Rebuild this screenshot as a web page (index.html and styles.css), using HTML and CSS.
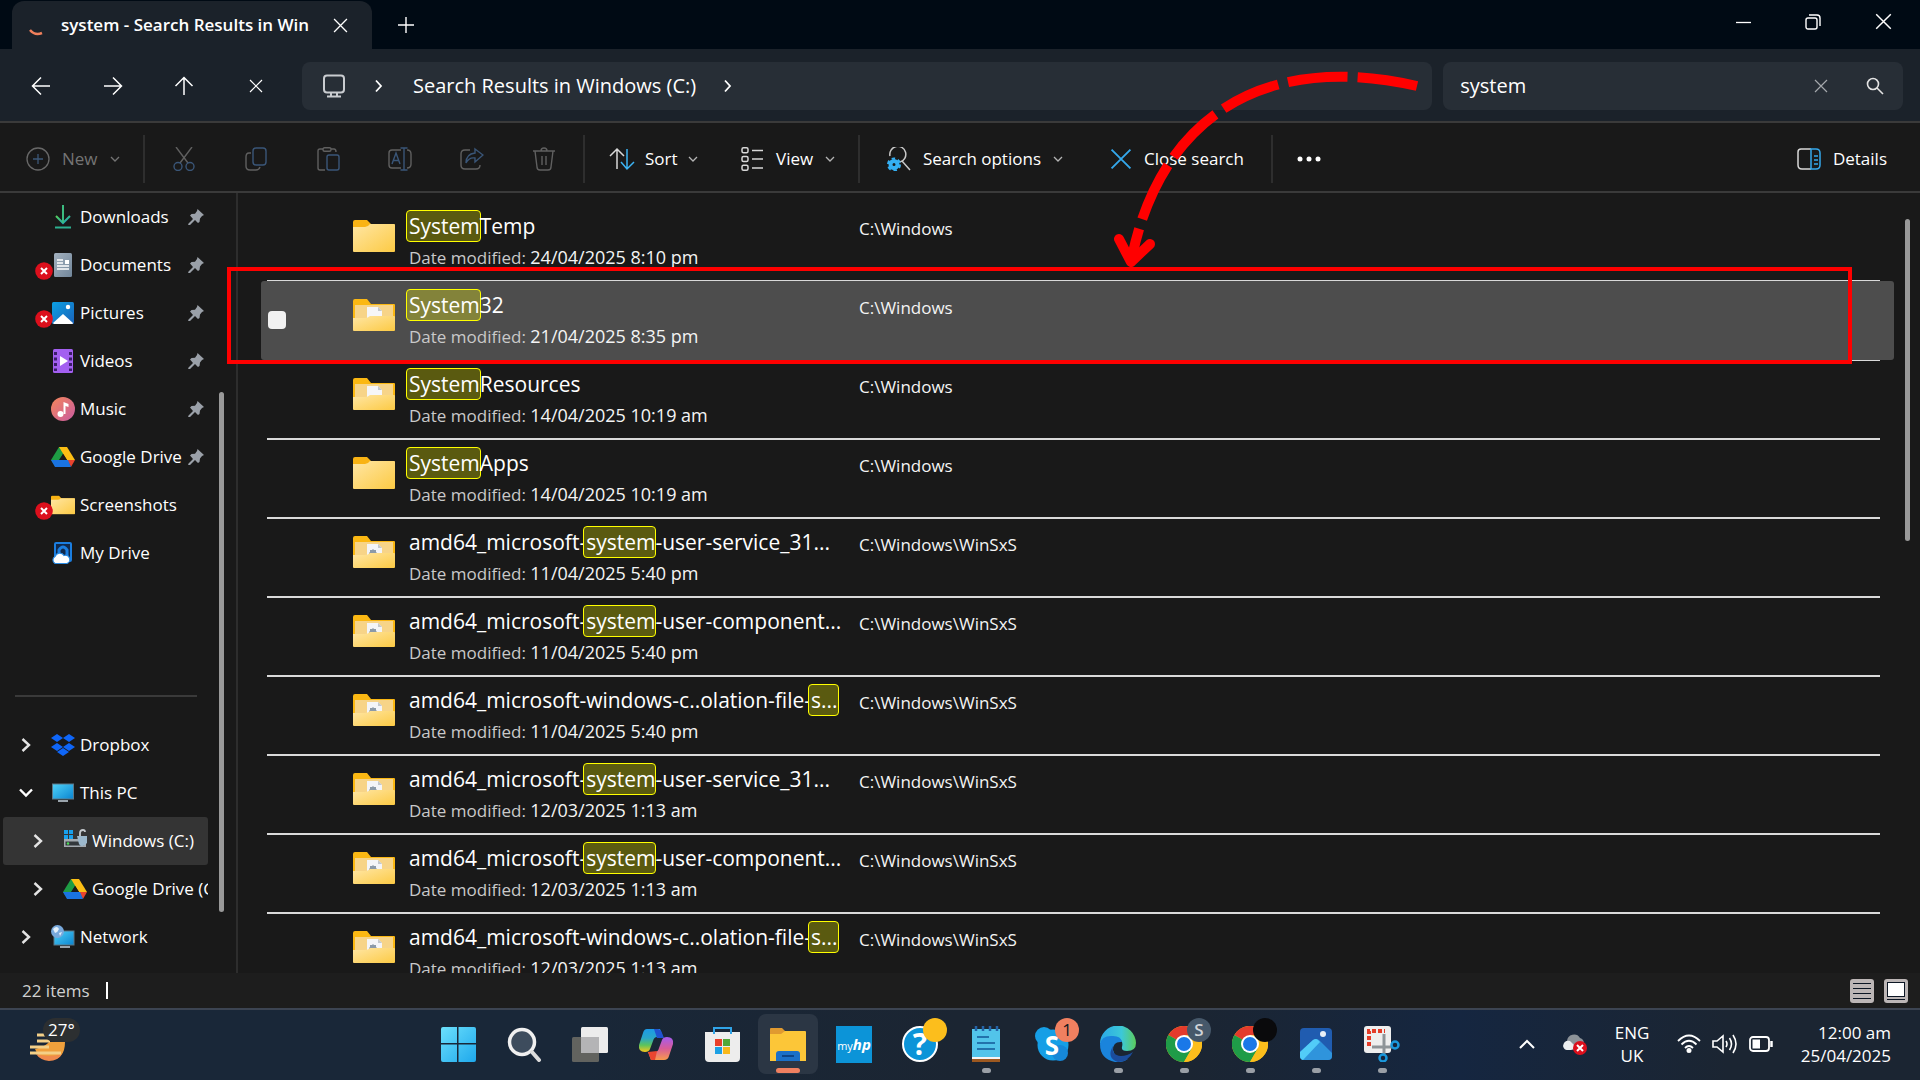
FILE: index.html
```html
<!DOCTYPE html>
<html lang="en-GB">
<head>
<meta charset="utf-8">
<title>system - Search Results in Windows (C:)</title>
<link rel="stylesheet" href="styles.css">
</head>
<body>
<svg class="defs" aria-hidden="true">
  <defs>
    <linearGradient id="gFront" x1="0" y1="0" x2="1" y2="1"><stop offset="0" stop-color="#ffe6a4"/><stop offset="1" stop-color="#fcca44"/></linearGradient>
    <linearGradient id="gSky" x1="0" y1="0" x2="1" y2="1"><stop offset="0" stop-color="#4fd2f8"/><stop offset="1" stop-color="#0a84d0"/></linearGradient>
    <linearGradient id="gPic" x1="0" y1="0" x2="1" y2="1"><stop offset="0" stop-color="#0ba0e4"/><stop offset="1" stop-color="#1a62b8"/></linearGradient>
    <linearGradient id="gMusic" x1="0" y1="0" x2="1" y2="1"><stop offset="0" stop-color="#f5875a"/><stop offset="1" stop-color="#c85aa0"/></linearGradient>
    <linearGradient id="gDown" x1="0" y1="0" x2="1" y2="1"><stop offset="0" stop-color="#55d05a"/><stop offset="1" stop-color="#14a0c8"/></linearGradient>
    <linearGradient id="gDoc" x1="0" y1="0" x2="1" y2="1"><stop offset="0" stop-color="#a4b2c0"/><stop offset="1" stop-color="#71869a"/></linearGradient>
    <linearGradient id="gCopA" x1="0" y1="0" x2="0" y2="1"><stop offset="0" stop-color="#1c9ae8"/><stop offset=".4" stop-color="#2aa6c8"/><stop offset=".7" stop-color="#5cc45c"/><stop offset="1" stop-color="#f8c81c"/></linearGradient>
    <linearGradient id="gCopB" x1="0" y1="0" x2="0" y2="1"><stop offset="0" stop-color="#a45cf0"/><stop offset=".5" stop-color="#d85c98"/><stop offset="1" stop-color="#f89a4c"/></linearGradient>
    <linearGradient id="gEdge" x1="0" y1="0" x2="1" y2="0"><stop offset="0" stop-color="#2aa8e8"/><stop offset=".6" stop-color="#3cc8d8"/><stop offset="1" stop-color="#5ccc5c"/></linearGradient>
    <linearGradient id="gStart" x1="0" y1="0" x2="1" y2="1"><stop offset="0" stop-color="#6ce0fc"/><stop offset="1" stop-color="#1ea8ec"/></linearGradient>
  </defs>
  <symbol id="folder" viewBox="0 0 42 34"><path d="M0 3a2 2 0 0 1 2-2h12l4 4h22a2 2 0 0 1 2 2v10H0z" fill="#f9b314"/><path d="M0 8h12q3 0 5-3h24a1 1 0 0 1 1 1v26a1 1 0 0 1-1 1H1a1 1 0 0 1-1-1z" fill="url(#gFront)"/></symbol>
  <symbol id="folder-doc" viewBox="0 0 42 34"><path d="M0 3a2 2 0 0 1 2-2h12l4 5h23a1 1 0 0 1 1 1v25H0z" fill="#fbb813"/><path d="M2 7h38v16H2z" fill="#f7d488"/><path d="M14 9h11l4 4v12H14z" fill="#f6f6f8"/><path d="M25 9v4h4z" fill="#c4c8cc"/><path d="M0 20h12q3 0 5-2h24a1 1 0 0 1 1 1v13a1 1 0 0 1-1 1H1a1 1 0 0 1-1-1z" fill="url(#gFront)"/></symbol>
  <symbol id="folder-gear" viewBox="0 0 42 34"><path d="M0 3a2 2 0 0 1 2-2h12l4 5h23a1 1 0 0 1 1 1v25H0z" fill="#fbb813"/><path d="M2 7h38v16H2z" fill="#f7d488"/><path d="M14 9h11l4 4v12H14z" fill="#f4f5f8"/><path d="M25 9v4h4z" fill="#c4c8cc"/><path d="M16 20v-2l1-1v-2h2l1-1 1 1h2v2l1 1v2h-2.500a1.500 1.500 0 0 0-3 0z" fill="#8c9aa8"/><path d="M0 20h12q3 0 5-2h24a1 1 0 0 1 1 1v13a1 1 0 0 1-1 1H1a1 1 0 0 1-1-1z" fill="url(#gFront)"/></symbol>
  <symbol id="pin" viewBox="0 0 16 16"><path d="M9.500 0 16 6l-2 1-2 2.500-.5 3.500-1.500 1-3-3-5 5-2 .5.500-2 4.500-4.500L2 6.500 3.500 5l3.500-.3L9 2z" fill="#9aa0a8"/></symbol>
  <symbol id="chev-right" viewBox="0 0 10 16"><path d="m1.500 2 6.500 6-6.500 6" fill="none" stroke="#e4e4e4" stroke-width="2.400"/></symbol>
  <symbol id="chev-crumb" viewBox="0 0 10 16"><path d="m2 2.500 5 5.500-5 5.500" fill="none" stroke="#fff" stroke-width="1.800"/></symbol>
  <symbol id="chev-down" viewBox="0 0 16 10"><path d="m2 1.500 6 6 6-6" fill="none" stroke="#fff" stroke-width="2.400"/></symbol>
  <symbol id="chev-small" viewBox="0 0 10 10"><path d="m1 3 4 4 4-4" fill="none" stroke="currentColor" stroke-width="1.300"/></symbol>
  <symbol id="cross" viewBox="0 0 14 14"><path d="M1 1l12 12M13 1 1 13" fill="none" stroke="currentColor" stroke-width="1.200"/></symbol>
  <symbol id="error" viewBox="0 0 18 18"><circle cx="9" cy="9" r="8.800" fill="#dc0f1c"/><path d="m6 6 6 6m0-6-6 6" stroke="#fff" stroke-width="2"/></symbol>
  <symbol id="gdrive" viewBox="0 0 24 22"><path d="M8 1h8l-8 14-4 5-4-6z" fill="#1e9c44"/><path d="M8 1h8l8 13h-8z" fill="#fcbe14"/><path d="M16 14h8l-4 7z" fill="#e8432e"/><path d="M0 14h17l3 7H4z" fill="#1a73e0"/><path d="M12 8l4 6H8z" fill="#191919"/></symbol>
  <symbol id="chrome" viewBox="0 0 36 36"><circle cx="18" cy="18" r="18" fill="#fcbe1c"/><path d="M18 18 2.400 9A18 18 0 0 1 33.600 9z" fill="#e43b2c"/><path d="M18 18 2.400 9A18 18 0 0 0 18 36l7.500-13z" fill="#1f9c48"/><path d="M18 9h15.600A18 18 0 0 1 18 36l7.800-13.500z" fill="#fcbe1c"/><circle cx="18" cy="18" r="9" fill="#fff"/><circle cx="18" cy="18" r="7" fill="#1a78e8"/></symbol>
</svg>

<div class="window">
  <header class="titlebar">
    <div class="tab">
      <svg class="spinner" width="14" height="8" viewBox="0 0 14 8"><path d="M1 1q5 6 12 3" fill="none" stroke="#f0805c" stroke-width="2.500"/></svg>
      <span class="tab-title">system - Search Results in Win</span>
      <button class="plain" aria-label="Close tab"><svg width="15" height="15"><use href="#cross"/></svg></button>
    </div>
    <button class="plain add-tab" aria-label="New tab"><svg width="16" height="16" viewBox="0 0 16 16"><path d="M8 0v16M0 8h16" stroke="#fff" stroke-width="1.400"/></svg></button>
    <div class="caption">
      <button class="plain" aria-label="Minimise"><svg width="16" height="16" viewBox="0 0 16 16"><path d="M1 8.500h15" stroke="#fff" stroke-width="1.300"/></svg></button>
      <button class="plain" aria-label="Restore"><svg width="16" height="16" viewBox="0 0 16 16" fill="none" stroke="#fff" stroke-width="1.400"><rect x="1" y="4" width="11" height="11" rx="2"/><path d="M4 1h8q3 0 3 3v8"/></svg></button>
      <button class="plain" aria-label="Close"><svg width="17" height="17"><use href="#cross"/></svg></button>
    </div>
  </header>

  <nav class="navbar">
    <div class="nav-buttons">
      <button class="plain" aria-label="Back"><svg width="20" height="20" viewBox="0 0 20 20" fill="none" stroke="#fff" stroke-width="1.500"><path d="M19 10H1.500M10 1.500 1.500 10l8.500 8.500"/></svg></button>
      <button class="plain" aria-label="Forward"><svg width="20" height="20" viewBox="0 0 20 20" fill="none" stroke="#fff" stroke-width="1.500"><path d="M1 10h17.500M10 1.500l8.500 8.500-8.500 8.500"/></svg></button>
      <button class="plain" aria-label="Up"><svg width="20" height="20" viewBox="0 0 20 20" fill="none" stroke="#fff" stroke-width="1.500"><path d="M10 19V1.500M1.500 10 10 1.500l8.500 8.500"/></svg></button>
      <button class="plain" aria-label="Stop"><svg width="14" height="14"><use href="#cross"/></svg></button>
    </div>
    <div class="address">
      <svg width="24" height="24" viewBox="0 0 24 24" fill="none" stroke="#c9ccd0" stroke-width="2"><rect x="2" y="1.500" width="20" height="17" rx="3"/><path d="M9 19v3M15 19v3M5 22.500h14"/></svg>
      <svg class="crumb-chev" width="10" height="16"><use href="#chev-crumb"/></svg>
      <a class="crumb" href="#">Search Results in Windows (C:)</a>
      <svg width="10" height="16"><use href="#chev-crumb"/></svg>
    </div>
    <div class="search">
      <input type="text" value="system" aria-label="Search">
      <button class="plain dim" aria-label="Clear"><svg width="14" height="14"><use href="#cross"/></svg></button>
      <button class="plain" aria-label="Search"><svg width="18" height="18" viewBox="0 0 18 18" fill="none" stroke="#e4e4e4" stroke-width="1.600"><circle cx="7" cy="7" r="5.500"/><path d="m11 11 6 6"/></svg></button>
    </div>
  </nav>

  <div class="commands">
    <button class="cmd new off"><svg width="24" height="24" viewBox="0 0 24 24" fill="none" stroke="#686868" stroke-width="1.300"><circle cx="12" cy="12" r="11"/><path d="M12 7v10M7 12h10" stroke="#3d5878"/></svg><span>New</span><svg width="10" height="10"><use href="#chev-small"/></svg></button>
    <i class="rule"></i>
    <div class="tools">
      <button class="plain" aria-label="Cut"><svg width="24" height="24" viewBox="0 0 24 24" fill="none" stroke="#606060" stroke-width="1.400"><path d="m4 0 12 16M20 0 8 16"/><g stroke="#3a5678"><circle cx="6" cy="19.500" r="4"/><circle cx="18" cy="19.500" r="4"/></g></svg></button>
      <button class="plain" aria-label="Copy"><svg width="24" height="24" viewBox="0 0 24 24" fill="none" stroke="#606060" stroke-width="1.400"><path d="M7 6H5Q2 6 2 10v9q0 4 4 4h6q3 0 4-3"/><rect x="9" y="1" width="13" height="17" rx="3" stroke="#3a5678"/></svg></button>
      <button class="plain" aria-label="Paste"><svg width="24" height="24" viewBox="0 0 24 24" fill="none" stroke="#606060" stroke-width="1.400"><path d="M7 2H4Q2 2 2 4v17q0 2 2 2h5M15 2h3q2 0 2 3"/><rect x="7" y="0.700" width="8" height="3.500" rx="1.500"/><rect x="11" y="8" width="12" height="15" rx="2" stroke="#3a5678"/></svg></button>
      <button class="plain" aria-label="Rename"><svg width="24" height="24" viewBox="0 0 24 24" fill="none" stroke="#606060" stroke-width="1.400"><path d="M13 3H4Q1 3 1 6v12q0 3 3 3h9M19 3q4 0 4 4v10q0 4-4 4"/><path d="m4 17 4-11 4 11M5.500 13.500h5M16 1v22M12.500 1h7M12.500 23h7" stroke="#3a5678"/></svg></button>
      <button class="plain" aria-label="Share"><svg width="24" height="24" viewBox="0 0 24 24" fill="none" stroke="#606060" stroke-width="1.400"><path d="M10 3H5Q1 3 1 7v11q0 4 4 4h11q4 0 4-4"/><path d="m15 2 8 6-8 7v-4Q9 10 6 16 6 7 15 6z" stroke="#3a5678"/></svg></button>
      <button class="plain" aria-label="Delete"><svg width="24" height="24" viewBox="0 0 24 24" fill="none" stroke="#606060" stroke-width="1.400"><path d="M1 4h22M9 4q0-3 3-3t3 3M3 4l2 16q0 3 3 3h8q3 0 3-3l2-16M10 9v9M14 9v9"/></svg></button>
    </div>
    <i class="rule"></i>
    <button class="cmd sort"><svg width="26" height="24" viewBox="0 0 26 24" fill="none" stroke="#d8d8d8" stroke-width="1.500"><path d="M8 22V2M1 9l7-7 7 7"/><path d="M18 2v20M12 15l6 7 7-7" stroke="#3cb4f4"/></svg><span>Sort</span><svg width="10" height="10"><use href="#chev-small"/></svg></button>
    <button class="cmd view"><svg width="24" height="24" viewBox="0 0 24 24" fill="none" stroke="#d8d8d8" stroke-width="1.500"><rect x="2" y="0.800" width="6" height="5" rx="1.500"/><rect x="2" y="9.500" width="6" height="5" rx="1.500"/><rect x="2" y="18.200" width="6" height="5" rx="1.500"/><path d="M12 3.500h11M12 12h11M12 21h11"/></svg><span>View</span><svg width="10" height="10"><use href="#chev-small"/></svg></button>
    <i class="rule"></i>
    <button class="cmd options"><svg width="24" height="24" viewBox="0 0 24 24" fill="none" stroke="#c8c8c8" stroke-width="1.500"><path d="M3 9A8 8 0 1 1 13 15M15 14l8 9"/><circle cx="7" cy="17.500" r="3.500" stroke="#34b0f4" stroke-width="4"/><circle cx="7" cy="17.500" r="6" stroke="#34b0f4" stroke-width="2" stroke-dasharray="3.500 2.800"/></svg><span>Search options</span><svg width="10" height="10"><use href="#chev-small"/></svg></button>
    <button class="cmd close-search"><svg class="blue" width="22" height="22"><use href="#cross"/></svg><span>Close search</span></button>
    <i class="rule"></i>
    <button class="plain more" aria-label="More"><svg width="24" height="6" viewBox="0 0 24 6" fill="#fff"><circle cx="3" cy="3" r="2.500"/><circle cx="12" cy="3" r="2.500"/><circle cx="21" cy="3" r="2.500"/></svg></button>
    <button class="cmd details"><svg width="24" height="24" viewBox="0 0 24 24" fill="none" stroke="#d8d8d8" stroke-width="1.500"><path d="M14 2H4Q1 2 1 5v13q0 4 4 4h9"/><path d="M14 2h5q4 0 4 4v12q0 4-4 4h-5zM17 9h4M17 13h4M17 17h4" stroke="#34a8ec"/></svg><span>Details</span></button>
  </div>

  <div class="body">
    <aside class="sidebar">
      <ul class="tree">
        <li><a href="#"><svg class="ico" viewBox="0 0 24 24"><path d="M5 11l7 7 7-7" fill="none" stroke="url(#gDown)" stroke-width="2"/><path d="M12 0v18" stroke="#3cbc80" stroke-width="2"/><path d="M4 22.500h16" stroke="#2cb090" stroke-width="2"/></svg><span>Downloads</span><svg class="pin"><use href="#pin"/></svg></a></li>
        <li><a href="#"><svg class="err"><use href="#error"/></svg><svg class="ico" viewBox="0 0 24 24"><rect x="3" y="0" width="18" height="24" rx="1.500" fill="url(#gDoc)"/><path d="M6 7h6M6 10h6M6 13h12M6 16h12" stroke="#fff" stroke-width="1.500"/><path d="M14 7h4v4h-4z" fill="#fff"/></svg><span>Documents</span><svg class="pin"><use href="#pin"/></svg></a></li>
        <li><a href="#"><svg class="err"><use href="#error"/></svg><svg class="ico" viewBox="0 0 24 24"><rect x="1" y="1" width="22" height="22" rx="1.500" fill="url(#gPic)"/><path d="m2 22 10-9 10 9q0 1-1 1H3z" fill="#fff"/><circle cx="17" cy="6" r="2.200" fill="#fff"/></svg><span>Pictures</span><svg class="pin"><use href="#pin"/></svg></a></li>
        <li><a href="#"><svg class="ico" viewBox="0 0 24 24"><rect x="2" y="0" width="20" height="24" rx="1.500" fill="#a35ff0"/><path d="M4.500 3v19M19.500 3v19" stroke="#3c1d6c" stroke-width="3" stroke-dasharray="3 2.500"/><path d="m9 7 8 5-8 5z" fill="#fff"/></svg><span>Videos</span><svg class="pin"><use href="#pin"/></svg></a></li>
        <li><a href="#"><svg class="ico" viewBox="0 0 24 24"><circle cx="12" cy="12" r="12" fill="url(#gMusic)"/><circle cx="9.500" cy="17" r="3" fill="#fff"/><path d="M12.500 17V5l5 2v3l-3-1v8z" fill="#fff"/></svg><span>Music</span><svg class="pin"><use href="#pin"/></svg></a></li>
        <li><a href="#"><svg class="ico" viewBox="0 0 24 22"><use href="#gdrive"/></svg><span>Google Drive</span><svg class="pin"><use href="#pin"/></svg></a></li>
        <li><a href="#"><svg class="err"><use href="#error"/></svg><svg class="ico" viewBox="0 0 42 34"><use href="#folder"/></svg><span>Screenshots</span></a></li>
        <li><a href="#"><svg class="ico" viewBox="0 0 24 24"><rect x="4" y="2" width="16" height="18" rx="1" fill="#10294c" stroke="#1b7ee0" stroke-width="2"/><path d="M8 14V9q4-6 8 0v6" fill="none" stroke="#1b7ee0" stroke-width="3"/><path d="M4 22.500a4 4 0 0 1 0-7 5 5 0 0 1 9-1 4 4 0 0 1 3 8z" fill="#fff" stroke="#2b8ce4" stroke-width="1.200"/></svg><span>My Drive</span></a></li>
      </ul>
      <ul class="tree places">
        <li><a href="#"><svg class="chev"><use href="#chev-right"/></svg><svg class="ico" viewBox="0 0 24 24" fill="#0f66f8"><path d="m6 1 6 4-6 4-6-4zM18 1l6 4-6 4-6-4zM6 10l6 4-6 4-6-4zM18 10l6 4-6 4-6-4zM12 15l6 4-6 4-6-4z"/></svg><span>Dropbox</span></a></li>
        <li><a href="#"><svg class="chev wide"><use href="#chev-down"/></svg><svg class="ico" viewBox="0 0 24 24"><path d="M7 19h10v2H7z" fill="#9aa4ac"/><rect x="1.500" y="3" width="21" height="15" fill="url(#gSky)" stroke="#5c7888"/></svg><span>This PC</span></a></li>
        <li class="deep current"><a href="#"><svg class="chev"><use href="#chev-right"/></svg><svg class="ico" viewBox="0 0 24 24"><path d="M1 1h4v4H1zM6 1h4v4H6zM1 6h4v4H1zM6 6h4v4H6z" fill="#18a0ec"/><path d="M1 10h22v8H1z" fill="#a4aab0"/><path d="M2.500 12.500h18v4h-18z" fill="#33383c"/><circle cx="5" cy="14.500" r="1.200" fill="#4cdc58"/><path d="M17 8V4q0-3 3-3 2 0 2 2" fill="none" stroke="#c4c8cc" stroke-width="1.800"/><path d="M14 7h10v7q-5 6-8 1z" fill="#9cb8cc"/></svg><span>Windows (C:)</span></a></li>
        <li class="deep"><a href="#"><svg class="chev"><use href="#chev-right"/></svg><svg class="ico" viewBox="0 0 24 22"><use href="#gdrive"/></svg><span>Google Drive (G:)</span></a></li>
        <li><a href="#"><svg class="chev"><use href="#chev-right"/></svg><svg class="ico" viewBox="0 0 24 24"><path d="M9 21h10v2H9z" fill="#9aa4ac"/><rect x="3" y="6" width="20" height="14" fill="url(#gSky)" stroke="#5c7888"/><circle cx="6.500" cy="6.500" r="6.500" fill="#79a9dc"/><path d="M2 4q4-4 6 0-1 3-4 4zM8 8l3-1-2 4z" fill="#e4f0fa"/></svg><span>Network</span></a></li>
      </ul>
      <i class="thumb side-thumb"></i>
    </aside>

    <main class="results">
      <ul class="rows">
        <li><svg class="fold"><use href="#folder"/></svg><div class="item"><a class="name" href="#"><mark>System</mark>Temp</a><p>Date modified: <b>24/04/2025 8:10 pm</b></p></div><span class="path">C:\Windows</span></li>
        <li class="selected"><input type="checkbox" aria-label="Select System32"><svg class="fold"><use href="#folder-doc"/></svg><div class="item"><a class="name" href="#"><mark>System</mark>32</a><p>Date modified: <b>21/04/2025 8:35 pm</b></p></div><span class="path">C:\Windows</span></li>
        <li><svg class="fold"><use href="#folder-doc"/></svg><div class="item"><a class="name" href="#"><mark>System</mark>Resources</a><p>Date modified: <b>14/04/2025 10:19 am</b></p></div><span class="path">C:\Windows</span></li>
        <li><svg class="fold"><use href="#folder"/></svg><div class="item"><a class="name" href="#"><mark>System</mark>Apps</a><p>Date modified: <b>14/04/2025 10:19 am</b></p></div><span class="path">C:\Windows</span></li>
        <li><svg class="fold"><use href="#folder-gear"/></svg><div class="item"><a class="name" href="#">amd64_microsoft-<mark>system</mark>-user-service_31...</a><p>Date modified: <b>11/04/2025 5:40 pm</b></p></div><span class="path">C:\Windows\WinSxS</span></li>
        <li><svg class="fold"><use href="#folder-gear"/></svg><div class="item"><a class="name" href="#">amd64_microsoft-<mark>system</mark>-user-component...</a><p>Date modified: <b>11/04/2025 5:40 pm</b></p></div><span class="path">C:\Windows\WinSxS</span></li>
        <li><svg class="fold"><use href="#folder-gear"/></svg><div class="item"><a class="name" href="#">amd64_microsoft-windows-c..olation-file-<mark>s...</mark></a><p>Date modified: <b>11/04/2025 5:40 pm</b></p></div><span class="path">C:\Windows\WinSxS</span></li>
        <li><svg class="fold"><use href="#folder-gear"/></svg><div class="item"><a class="name" href="#">amd64_microsoft-<mark>system</mark>-user-service_31...</a><p>Date modified: <b>12/03/2025 1:13 am</b></p></div><span class="path">C:\Windows\WinSxS</span></li>
        <li><svg class="fold"><use href="#folder-gear"/></svg><div class="item"><a class="name" href="#">amd64_microsoft-<mark>system</mark>-user-component...</a><p>Date modified: <b>12/03/2025 1:13 am</b></p></div><span class="path">C:\Windows\WinSxS</span></li>
        <li><svg class="fold"><use href="#folder-gear"/></svg><div class="item"><a class="name" href="#">amd64_microsoft-windows-c..olation-file-<mark>s...</mark></a><p>Date modified: <b>12/03/2025 1:13 am</b></p></div><span class="path">C:\Windows\WinSxS</span></li>
      </ul>
      <i class="thumb list-thumb"></i>
    </main>
  </div>

  <footer class="status">
    <span>22 items</span><i class="caret"></i>
    <div class="modes">
      <button class="plain" aria-label="Details view"><svg width="24" height="24" viewBox="0 0 24 24"><rect width="24" height="24" rx="3" fill="#bcb6b6"/><path d="M3 4.500h18M3 9.500h18M3 14.500h18M3 19.500h18" stroke="#0c1624" stroke-width="1.200"/></svg></button>
      <button class="plain" aria-label="Large icons view"><svg width="24" height="24" viewBox="0 0 24 24"><rect width="24" height="24" rx="3" fill="#bcb6b6"/><rect x="3.500" y="3.500" width="17" height="14" fill="#fff" stroke="#0c1624"/><path d="M3 20.500h18" stroke="#0c1624"/></svg></button>
    </div>
  </footer>
</div>

<div class="taskbar">
  <button class="weather" aria-label="Weather"><svg width="36" height="30" viewBox="0 0 36 30"><path d="M5 17q10-2 14-7h16q0 18-16 18-10 0-14-11z" fill="#f0a03c"/><path d="M6 22q13 4 26 0-4 7-13 7-9-1-13-7z" fill="#f08a4c"/><path d="M7 3h9M7 9h13M0 15h19M0 21h31" stroke="#f4d088" stroke-width="3"/></svg><span>27°</span></button>
  <div class="apps">
    <button aria-label="Start"><svg viewBox="0 0 36 36" fill="url(#gStart)"><path d="M1 3q0-2 2-2h14v16H1zM18.500 1H34q2 0 2 2v14H18.500zM1 18.500h16V36H3q-2 0-2-2zM18.500 18.500H36V34q0 2-2 2H18.500z"/></svg></button>
    <button aria-label="Search"><svg viewBox="0 0 36 36"><circle cx="16" cy="16" r="12.500" fill="#3d4c5d" stroke="#f0f0f0" stroke-width="3.500"/><path d="m26 26 7 8" stroke="#dcdcdc" stroke-width="4" stroke-linecap="round"/></svg></button>
    <button aria-label="Task view"><svg viewBox="0 0 36 36"><rect x="0" y="11" width="27" height="25" rx="1.500" fill="#62635f"/><rect x="9" y="1" width="27" height="26" rx="1.500" fill="#ececec"/><path d="M9 11h18v16H9z" fill="#b4b4b6"/></svg></button>
    <button aria-label="Copilot"><svg viewBox="0 0 36 36"><path d="M9 3h13l3 8h-6q-3 0-4 4l-3 8q-1 3-5 3-7 0-6-7L5 7q1-4 4-4z" fill="url(#gCopA)"/><path d="M19 3q4 0 5 4l2 5h-7l-3-9z" fill="#2052d0"/><path d="M26 34H13l-3-8h7q3 0 4-4l3-8q1-3 5-3 7 0 6 7l-4 12q-1 4-5 4z" fill="url(#gCopB)"/><path d="m10 26 3 8h4l2-9z" fill="#ea4530"/></svg></button>
    <button aria-label="Store"><svg viewBox="0 0 36 36"><path d="M1 6h35v26q0 4-4 4H5q-4 0-4-4z" fill="#ededed"/><path d="M10 8V2h17v6" fill="none" stroke="#30a4e8" stroke-width="2"/><path d="M11 13h7v7h-7z" fill="#e8402a"/><path d="M19 13h7v7h-7z" fill="#52a838"/><path d="M11 21h7v7h-7z" fill="#1ca0e4"/><path d="M19 21h7v7h-7z" fill="#f8b81c"/></svg></button>
    <button class="active" aria-label="File Explorer"><svg viewBox="0 0 36 36"><path d="M0 3q0-1 1-1h11l3 3v5H0z" fill="#e09a30"/><path d="M0 8h11l4-3h20q1 0 1 1v29H0z" fill="#fcc638"/><path d="M6 35v-7q0-3 3-3h18q3 0 3 3v7z" fill="#1b70c8"/><path d="M12 30h12" stroke="#0d4588" stroke-width="2"/></svg><i class="run"></i></button>
    <button aria-label="myHP"><span class="myhp">my<em>hp</em></span></button>
    <button aria-label="Help"><span class="help">?</span><i class="badge amber"></i></button>
    <button aria-label="Notepad"><svg viewBox="0 0 36 36"><path d="M4 3h28v29H4z" fill="#52c4ea"/><path d="M4 31h28v2H4z" fill="#f4f4f4"/><path d="M4 33h28v3H4z" fill="#9c5820"/><path d="M9 11h12M9 17h18M9 23h18" stroke="#2272ac" stroke-width="2"/><path d="M8 0v5M15 0v5M22 0v5M29 0v5" stroke="#2464a8" stroke-width="2.500"/></svg><i class="run"></i></button>
    <button aria-label="Skype"><svg viewBox="0 0 36 36"><circle cx="19" cy="19" r="15.500" fill="#169fe6"/><circle cx="10" cy="10" r="9" fill="#169fe6"/><circle cx="26" cy="27" r="8" fill="#1688d8"/></svg><span class="skype">S</span><i class="badge coral">1</i></button>
    <button aria-label="Edge"><svg viewBox="0 0 36 36"><path d="M0 18A18 18 0 0 1 36 17q0 8-9 8-6 0-5-4 2-8-6-9-10-1-16 6z" fill="url(#gEdge)"/><path d="M0 18q2-9 13-8 8 0 9 6-9-1-9 8 3 12 15 9-6 4-13 3Q0 33 0 18z" fill="#1a84dc"/><path d="M13 20q-2 9 8 10 6 0 12-4-5 10-15 10-12-4-5-16z" fill="#1b4c9c"/></svg><i class="run"></i></button>
    <button aria-label="Chrome, profile S"><svg viewBox="0 0 36 36"><use href="#chrome"/></svg><i class="badge slate">S</i><i class="run"></i></button>
    <button aria-label="Chrome"><svg viewBox="0 0 36 36"><use href="#chrome"/></svg><i class="badge black"></i><i class="run"></i></button>
    <button aria-label="Photos"><svg viewBox="0 0 36 36"><rect x="2" y="2" width="32" height="32" rx="4" fill="#205cb0"/><path d="M2 26 15 14q3-2 6 0l13 13v3q0 4-4 4H6q-4 0-4-4z" fill="#2f94dc"/><path d="m2 26 13-12q3-2 5 0l2 2L5 34q-3-1-3-4z" fill="#52ccf8"/><circle cx="25" cy="8" r="3" fill="#e8f0f8"/></svg><i class="run"></i></button>
    <button aria-label="Snipping Tool"><svg viewBox="0 0 36 36"><rect x="0" y="0" width="27" height="27" rx="3" fill="#eeeeee"/><path d="M5 20V5h16" fill="none" stroke="#e43c28" stroke-width="4" stroke-dasharray="4 2"/><path d="M20 8v20M8 21h20" stroke="#8e9498" stroke-width="3"/><circle cx="31" cy="19" r="3.500" fill="none" stroke="#1a98dc" stroke-width="2.500"/><circle cx="19" cy="32" r="3.500" fill="none" stroke="#1a98dc" stroke-width="2.500"/></svg><i class="run"></i></button>
  </div>
  <div class="tray">
    <button class="plain" aria-label="Show hidden icons"><svg width="16" height="10" viewBox="0 0 16 10"><path d="m1 9 7-7 7 7" fill="none" stroke="#fff" stroke-width="2"/></svg></button>
    <button class="plain cloud" aria-label="OneDrive"><svg width="26" height="22" viewBox="0 0 26 22"><path d="M5 17a5 5 0 0 1 0-9 7 7 0 0 1 13-3q4 1 4 6t-4 6z" fill="#8c9298"/><path d="M1 13q1-6 7-5l6 6-5 3H5q-3 0-4-4z" fill="#eceef0"/><circle cx="18" cy="15" r="7" fill="#dc0f1c"/><path d="m15 12 6 6m0-6-6 6" stroke="#fff" stroke-width="2"/></svg></button>
    <button class="plain lang">ENG<br>UK</button>
    <button class="plain net" aria-label="Network, volume, battery">
      <svg width="24" height="20" viewBox="0 0 24 20" fill="none" stroke="#fff" stroke-width="1.800"><path d="M1 7q11-11 22 0M4.500 10.500q7.500-7.500 15 0M8 14q4-4 8 0"/><circle cx="12" cy="16.500" r="1.600" fill="#fff"/></svg>
      <svg width="26" height="20" viewBox="0 0 26 20" fill="none" stroke="#fff" stroke-width="1.600"><path d="M1 7h4l6-5v16l-6-5H1zM14 7q2 3 0 6M17.500 4q4 6 0 12M21 1q6 9 0 18"/></svg>
      <svg width="24" height="16" viewBox="0 0 24 16"><rect x="1" y="1" width="19" height="14" rx="3" fill="none" stroke="#fff" stroke-width="1.800"/><path d="M3.500 3.500H11v9H3.500z" fill="#fff"/><path d="M22.500 5v6" stroke="#fff" stroke-width="2.500"/></svg>
    </button>
    <button class="plain clock">12:00 am<br>25/04/2025</button>
  </div>
</div>

<div class="callout-box"></div>
<svg class="callout-arrow" width="320" height="210" viewBox="1110 60 320 210" fill="none" stroke="#f00" stroke-width="10"><path d="M1417 86C1260 50 1158 121 1131 262" stroke-dasharray="60 10"/><path d="m1119 239 12 23 19-18" stroke-linecap="round" stroke-linejoin="round"/></svg>
</body>
</html>
```
FILE: styles.css
```css
* { box-sizing: border-box; }

body {
  margin: 0;
  height: 100vh;
  display: flex;
  flex-direction: column;
  position: relative;
  overflow: hidden;
  background: #191919;
  color: #fff;
  font: 17px/24px "Open Sans", "Noto Sans", sans-serif;
}

svg { display: block; flex: none; }
ul, p { margin: 0; padding: 0; list-style: none; }
a { color: inherit; text-decoration: none; }
i, em { font-style: normal; }
button { font: inherit; color: inherit; background: none; border: 0; padding: 0; }
.defs { position: absolute; width: 0; height: 0; }
.plain { display: flex; align-items: center; justify-content: center; }
.dim { color: #a4a8ac; }
.blue { color: #34a8ec; }

.window { flex: 1; min-height: 0; display: flex; flex-direction: column; }

/* Title bar */
.titlebar { height: 49px; flex: none; display: flex; padding-right: 2px; background: #000a14; }
.tab {
  width: 360px;
  margin: 1px 0 0 12px;
  padding: 0 24px 0 17px;
  display: flex;
  align-items: center;
  gap: 18px;
  background: #1b222a;
  border-radius: 12px 12px 0 0;
}
.spinner { margin-top: 16px; }
.tab-title { flex: 1; white-space: nowrap; font-weight: 600; }
.add-tab { width: 68px; }
.caption { margin-left: auto; display: flex; }
.caption .plain { width: 70px; height: 43px; }

/* Navigation bar */
.navbar { height: 72px; flex: none; display: flex; align-items: center; padding: 2px 17px 0 0; background: #1b222a; }
.nav-buttons { display: flex; width: 302px; padding: 0 10px 0 5px; }
.nav-buttons .plain { width: 72px; height: 48px; }
.address, .search { height: 48px; display: flex; align-items: center; border-radius: 8px; background: #272e36; }
.address { flex: 1; padding-left: 20px; font-size: 20px; }
.crumb-chev { margin: 0 29px 0 28px; }
.crumb { margin-right: 27px; }
.search { width: calc(24% + 3px); margin-left: 11px; padding: 0 19px 0 17px; gap: 38px; }
.search input { flex: 1; min-width: 0; padding: 0; border: 0; outline: 0; background: none; color: #fff; font: inherit; font-size: 20px; }

/* Command bar */
.commands {
  height: 72px;
  flex: none;
  display: flex;
  align-items: center;
  padding: 4px 33px 0 26px;
  border-top: 2px solid #3a3a3a;
  border-bottom: 2px solid #3a3a3a;
  white-space: nowrap;
}
.cmd { display: flex; align-items: center; gap: 10px; }
.cmd svg:last-child { color: #b4b4b4; }
.off, .off svg:last-child { color: #747474; }
.new { width: 117px; gap: 12px; }
.rule { width: 2px; height: 48px; background: #2e2e2e; }
.tools { display: flex; width: 438px; padding-left: 3px; }
.tools .plain { width: 72px; height: 48px; }
.sort { width: 155px; padding-left: 24px; }
.view { width: 118px; gap: 12px; }
.options { width: 250px; padding-left: 27px; gap: 12px; }
.close-search { width: 161px; gap: 12px; }
.more { width: 72px; }
.details { margin-left: auto; gap: 12px; }

/* Sidebar */
.body { flex: 1; min-height: 0; display: flex; }
.sidebar { width: 238px; flex: none; position: relative; overflow: hidden; border-right: 2px solid #2d2d2d; }
.tree { width: 208px; padding: 0 0 0 3px; }
.tree a { position: relative; height: 48px; display: flex; align-items: center; padding-left: 48px; gap: 5px; white-space: nowrap; overflow: hidden; }
.tree .deep a { padding-left: 60px; }
.tree .current { background: #343434; border-radius: 3px; }
.ico { width: 24px; height: 24px; }
.pin { position: absolute; right: 4px; top: 16px; width: 16px; height: 16px; }
.err { position: absolute; left: 32px; top: 21px; width: 18px; height: 18px; }
.chev { position: absolute; left: 18px; top: 16px; width: 10px; height: 16px; }
.deep .chev { left: 30px; }
.chev.wide { left: 15px; top: 19px; width: 16px; height: 10px; }
.places { margin-top: 118px; }
.places::before { content: ""; display: block; width: 182px; height: 2px; margin: 0 0 24px 12px; background: #3a3a3a; }
.thumb { position: absolute; width: 5px; border-radius: 3px; background: #999; }
.side-thumb { right: 12px; top: 199px; height: 520px; }
.list-thumb { right: 10px; top: 26px; height: 322px; }

/* Results */
.results { flex: 1; min-width: 0; position: relative; overflow: hidden; padding: 9px 26px 0 23px; }
.rows li {
  position: relative;
  height: 79px;
  display: flex;
  padding: 5px 0 0 92px;
}
.rows li::before {
  content: "";
  position: absolute;
  inset: -1px 14px auto 6px;
  height: 2px;
  background: #d9d9d9;
}
.rows li:first-child::before { display: none; }
.rows .selected { background: #4d4d4d; z-index: 1; border-radius: 3px; }
.rows .selected::before { height: 1px; }
.rows input { appearance: none; position: absolute; left: 7px; top: 30px; width: 18px; height: 18px; margin: 0; border-radius: 4px; background: #f2f2f2; }
.fold { width: 42px; height: 34px; margin: 12px 14px 0 0; }
.item { width: 450px; white-space: nowrap; }
.name { display: block; height: 38px; line-height: 38px; font-size: 21px; }
.item p { color: #c9c9c9; }
.item b, .path { font-weight: 400; color: #f4f4f4; }
.item b { font-size: 18px; }
.path { margin-top: 10px; }
mark { display: inline-block; height: 32px; line-height: 30px; padding: 0 0 0 2px; margin: 0 -1px 0 -3px; border: 1px solid #ff0; border-radius: 4px; background: #5a5a10; color: inherit; }
.selected mark { background: #83833a; }

/* Status bar */
.status { height: 35px; flex: none; display: flex; align-items: center; padding: 0 12px 0 22px; background: #1d1d1d; color: #d0d0d0; }
.caret { width: 2px; height: 17px; margin-left: 16px; background: #fff; }
.modes { margin-left: auto; display: flex; gap: 10px; }

/* Taskbar */
.taskbar {
  height: 72px;
  flex: none;
  display: flex;
  align-items: center;
  padding-bottom: 2px;
  border-top: 2px solid #3c4452;
  background: linear-gradient(90deg, #192738 0 30%, #1b2532 50%, #1b2532 62%, #152640 76%, #1b2532 90%);
}
.weather { position: relative; display: flex; align-items: flex-start; width: 428px; height: 68px; padding: 22px 0 0 30px; }
.weather span { position: absolute; left: 43px; top: 8px; height: 24px; padding: 0 5px; border-radius: 12px; background: #2c2f31; }
.apps { display: flex; gap: 6px; }
.apps button { position: relative; width: 60px; height: 60px; display: flex; align-items: center; justify-content: center; border-radius: 8px; }
.apps button > svg { width: 36px; height: 36px; }
.apps .active { background: #2b3644; }
.run { position: absolute; left: 26px; bottom: 1px; width: 9px; height: 5px; border-radius: 3px; background: #9a9fa6; }
.active .run { left: 18px; width: 24px; background: #f08060; }
.badge { position: absolute; right: 3px; top: 4px; width: 24px; height: 24px; border-radius: 12px; line-height: 24px; text-align: center; }
.amber { background: #fcbe1c; }
.coral { background: #f08060; color: #101820; }
.slate { background: #46586a; color: #d0d4d8; font-weight: 600; }
.black { background: #0a0a0c; }
.myhp { width: 36px; height: 37px; background: #0c94d8; font-size: 11px; line-height: 37px; }
.myhp em { font-size: 15px; font-weight: 700; font-style: italic; }
.help { width: 36px; height: 36px; border: 2px solid #fff; border-radius: 18px; background: #0c94d8; font-size: 30px; line-height: 32px; font-weight: 700; }
.skype { position: absolute; inset: 13px; font-size: 26px; line-height: 36px; font-weight: 700; }
.tray { margin-left: auto; padding-right: 29px; display: flex; align-items: center; line-height: 23px; }
.cloud { margin-left: 27px; }
.lang { width: 40px; margin: 0 25px 0 24px; }
.net { gap: 11px; }
.clock { justify-content: flex-end; width: 118px; text-align: right; }

/* Annotation drawn over the window */
.callout-box { position: absolute; left: 227px; right: 68px; top: 267px; height: 97px; border: 4px solid #f00; z-index: 2; }
.callout-arrow { position: absolute; left: 1110px; top: 60px; z-index: 2; }
```
